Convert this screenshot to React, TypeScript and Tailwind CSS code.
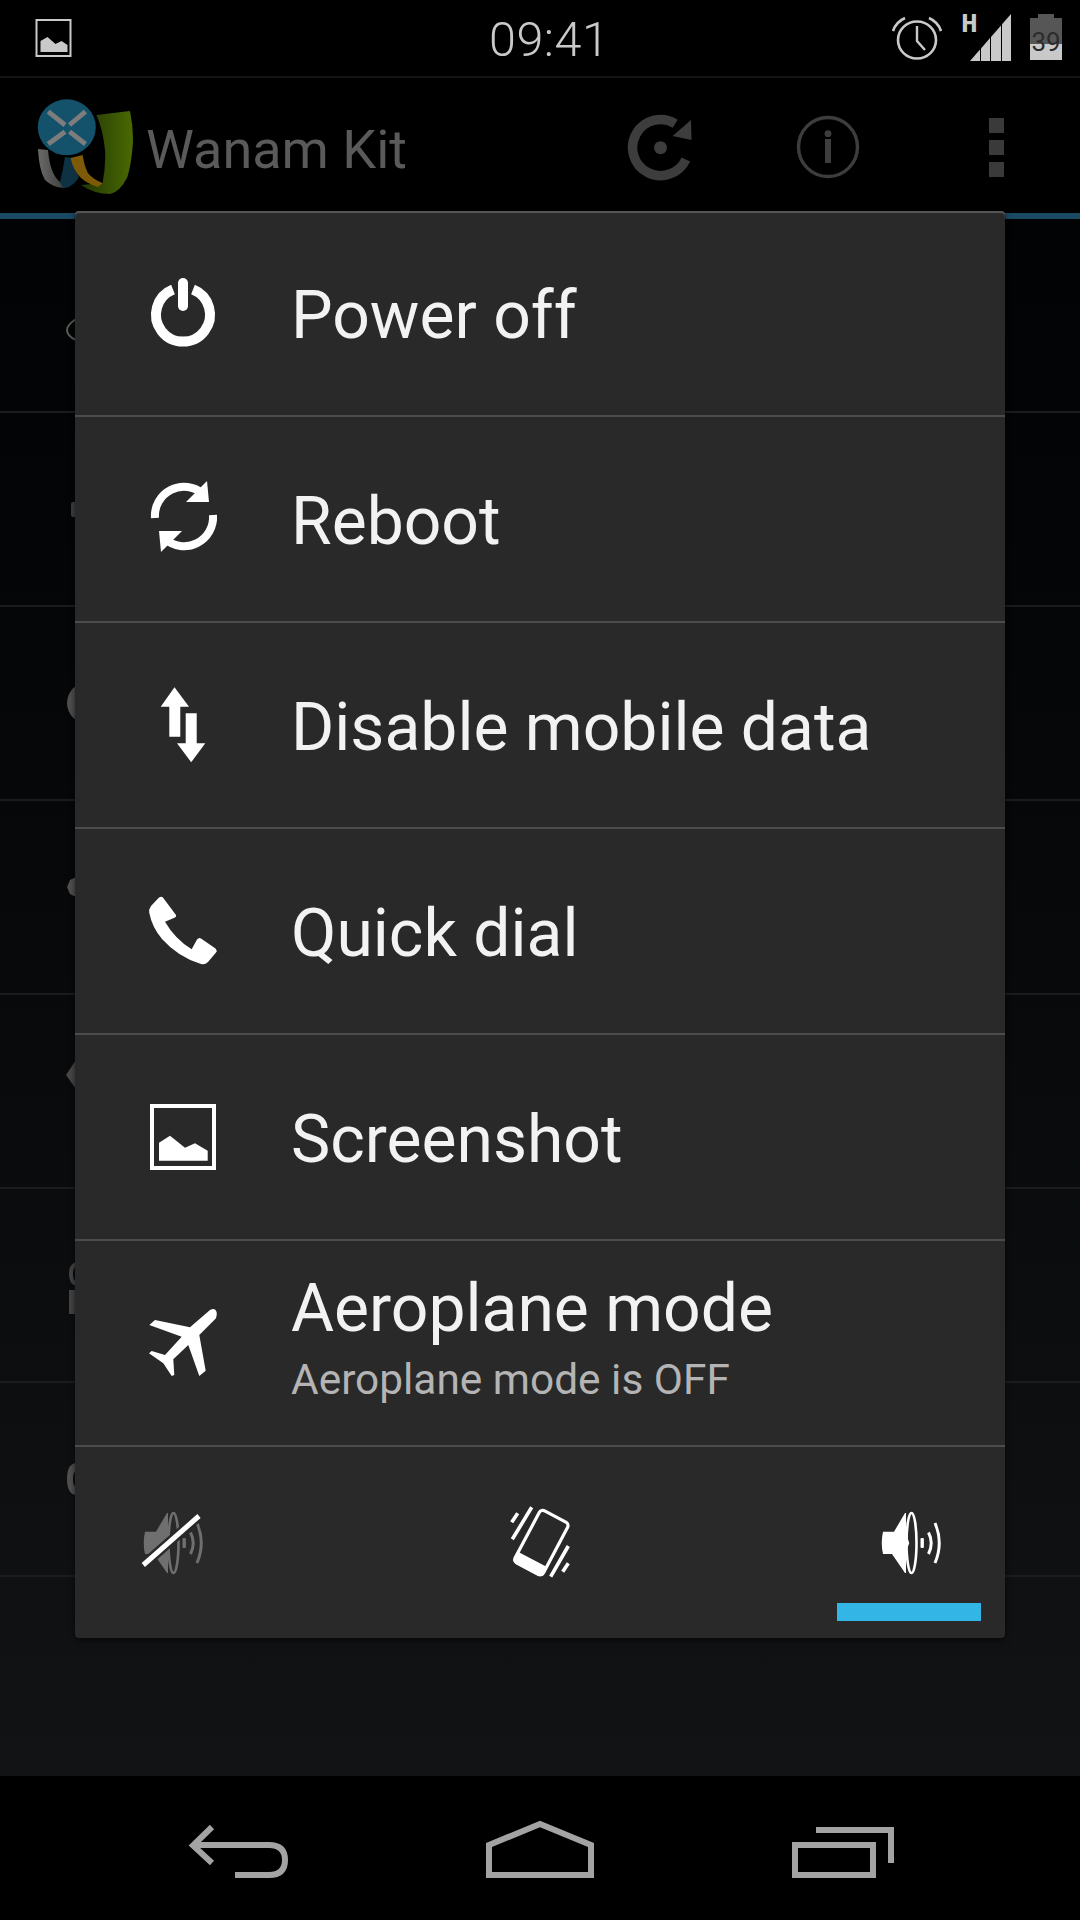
import type { ReactNode } from 'react'

function Icon({ children }: { children: ReactNode }) {
  return (
    <svg width="80" height="80" viewBox="0 0 80 80" className="shrink-0 overflow-visible">
      {children}
    </svg>
  )
}

const PowerIcon = () => (
  <Icon>
    <path d="M30 16 A27 27 0 1 0 50 16" fill="none" stroke="#fff" strokeWidth="10" transform="translate(0 0.5)" />
    <rect x="35" y="5" width="10" height="33" rx="5" fill="#fff" />
  </Icon>
)

const RebootIcon = () => (
  <Icon>
    <path d="M12 39 A29 29 0 0 1 60 15" fill="none" stroke="#fff" strokeWidth="8" />
    <path d="M64 2 L66 23 L43 23 Z" fill="#fff" />
    <path d="M70 36 A29 29 0 0 1 22 60" fill="none" stroke="#fff" strokeWidth="8" />
    <path d="M18 73 L16 52 L39 52 Z" fill="#fff" />
  </Icon>
)

const DataIcon = () => (
  <Icon>
    <path d="M31.5 2.3 L46 21.7 L37.3 21.7 L37.3 51.7 L26.3 51.7 L26.3 21.7 L17.7 21.7 Z" fill="#fff" />
    <path d="M48.2 77.3 L34 58.3 L42.7 58.3 L42.7 28.3 L53.7 28.3 L53.7 58.3 L62.3 58.3 Z" fill="#fff" />
  </Icon>
)

const PhoneIcon = () => (
  <Icon>
    <path
      d="M19.7 6.3 L33 24 Q33.5 25.5 32 26.5 L22 30.7 Q32 48 48.7 58.3 L54 48.5 Q56 46 58 47.5 L72.5 57.5 Q74.5 59.5 73 61.5 L65 71 Q62 74 58 73 Q35 66 19 48 Q9 36 6.3 22 Q5.5 18.5 8 15 L15.5 7 Q18 5 19.7 6.3 Z"
      fill="#fff"
    />
  </Icon>
)

const PictureIcon = () => (
  <Icon>
    <rect x="9" y="9" width="62" height="62" fill="none" stroke="#fff" strokeWidth="4" />
    <path d="M16 63.7 L16 45.7 L27 38.7 L42 50.7 L52 46.3 L64.7 53.7 L64.7 63.7 Z" fill="#fff" />
  </Icon>
)

const PlaneIcon = () => (
  <Icon>
    <path
      d="M67 7 L47 24.3 L12 17 L6.3 22 L38.7 33.7 L22 52 L8.7 48 L6 50.3 L20.3 60.3 L28.7 73 L31.3 72 L30.3 56.3 L45.3 42 L56.3 73 L62.7 67.7 L56.3 32 L73 15.3 Q75 9 72 6.5 Q70 5.5 67 7 Z"
      fill="#fff"
    />
  </Icon>
)

function Speaker({ color }: { color: string }) {
  return (
    <>
      <path
        d="M14 29.7 L25 29.7 L36 11 L37 11 L37 31 L40.3 41.3 L37 49 L37 71 L36 71 L23 52 L14 52 Q11.5 41 14 29.7 Z"
        fill={color}
      />
      <ellipse cx="42.5" cy="41" rx="5" ry="30" fill="none" stroke={color} strokeWidth="2.6" />
      <rect x="51.5" y="36" width="3.4" height="10" rx="1" fill={color} />
      <path d="M59.5 30.5 Q65 41 59.5 52" fill="none" stroke={color} strokeWidth="3" />
      <path d="M66 21 Q74.5 41 66 61" fill="none" stroke={color} strokeWidth="3" />
    </>
  )
}

const MuteIcon = () => (
  <Icon>
    <g transform="translate(-2 0)">
      <Speaker color="#6f6f6f" />
    </g>
    <path d="M10.3 63 L66 14" stroke="#292929" strokeWidth="10" />
    <path d="M10.3 63 L66 14" stroke="#fff" strokeWidth="5" />
  </Icon>
)

const VibrateIcon = () => (
  <Icon>
    <g transform="translate(40.4 40.6) rotate(28)">
      <rect x="-16" y="-29.5" width="32" height="59" rx="4" fill="none" stroke="#fff" strokeWidth="3.2" />
      <path d="M-17 19 L17 19 L17 27 Q17 30.5 13 30.5 L-13 30.5 Q-17 30.5 -17 27 Z" fill="#fff" />
    </g>
    <path d="M30.7 5.3 L11.3 37.3 M16.7 11.3 L10.7 20.3 M67.3 44 L49.7 74.7 M67.3 61.3 L61.7 69.7" stroke="#fff" strokeWidth="3.6" />
  </Icon>
)

const SoundIcon = () => (
  <Icon>
    <Speaker color="#fff" />
  </Icon>
)

function BackIcon() {
  return (
    <svg width="120" height="144" viewBox="0 0 120 144" fill="none" stroke="#a3a3a3" strokeWidth="6" className="shrink-0">
      <path d="M33 51 L14 69.5 L33 87" />
      <path d="M14 69 L90 69 Q106 69 106 84 Q106 99 90 99 L56 99" />
    </svg>
  )
}

function HomeIcon() {
  return (
    <svg width="120" height="144" viewBox="0 0 120 144" fill="none" stroke="#a3a3a3" strokeWidth="6" className="shrink-0">
      <path d="M9 69 L60 48 L111 69 L111 99 L9 99 Z" />
    </svg>
  )
}

function RecentsIcon() {
  return (
    <svg width="120" height="144" viewBox="0 0 120 144" fill="none" stroke="#a3a3a3" strokeWidth="6" className="shrink-0">
      <rect x="14" y="69" width="78" height="30" />
      <path d="M35 54 L110 54 L110 87" />
    </svg>
  )
}

function Logo() {
  return (
    <svg width="96" height="96" viewBox="37 99 96 96" className="ml-[37px] shrink-0">
      <defs>
        <linearGradient id="ribbon" x1="0" y1="0" x2="1" y2="0">
          <stop offset="0" stopColor="#223505" />
          <stop offset="1" stopColor="#4a6a02" />
        </linearGradient>
        <linearGradient id="tail" x1="0" y1="0" x2="1" y2="0">
          <stop offset="0" stopColor="#6a6a68" />
          <stop offset="1" stopColor="#3f3f3d" />
        </linearGradient>
      </defs>
      <path d="M38 149 L48 150 Q49 162 52 170 Q55 178 60 182 L64 188 Q52 187 45 180 Q39 170 38 149 Z" fill="url(#tail)" />
      <path d="M60 182 Q63 170 65 157 L72 158 Q74 170 79 177 Q74 186 65 188 L63 188 Z" fill="#0e3244" />
      <path d="M96.4 115 L130 111 Q134 130 132.6 147 Q131 165 127.4 177 Q120 192 110 194 Q94 194 81 185 L102.6 183 Q106 165 105 150 Q103 130 96.4 115 Z" fill="url(#ribbon)" />
      <path d="M70.6 158 L82.6 155 Q84 165 87.8 173 Q94 180 102.6 183 L98 187 Q88 184 81 178 Q73 170 70.6 158 Z" fill="#7c5a08" />
      <ellipse cx="66.8" cy="127.3" rx="29" ry="28" fill="#14526c" />
      <path d="M48.2 111.7 L65 125 M85.4 111.7 L69.5 125 M48.2 144 L65 131.7 M85.4 144 L69.5 131.7" stroke="#7d7d7d" strokeWidth="4.8" />
    </svg>
  )
}

const peeks: ReactNode[] = [
  <path key="cloud" d="M10 44 Q1 50 1 55 Q1 61 10 65" fill="none" stroke="#5a5a5a" strokeWidth="2" />,
  <rect key="toggle" x="5" y="33" width="6" height="15" rx="2" fill="#404040" />,
  <circle key="disc" cx="22" cy="40" r="21" fill="#4f4f4f" />,
  <path key="gear" d="M10 20 L4 23 L1 30 L4 37 L10 40 Z" fill="#505050" />,
  <path key="wedge" d="M10 9 L0 24 L10 38 Z" fill="#484848" />,
  <g key="lock" fill="none" stroke="#444">
    <path d="M10 19 Q5 21 5 29 Q5 37 10 39" strokeWidth="4" />
    <path d="M3 45 L3 69 L10 69 L10 45 Z" fill="#444" strokeWidth="0" />
  </g>,
  <path key="ring" d="M10 24 Q1 25 1 40 Q1 55 10 56 L10 48 Q7 47 7 40 Q7 33 10 32 Z" fill="#505050" />,
]

const items = [
  { label: 'Power off', icon: <PowerIcon /> },
  { label: 'Reboot', icon: <RebootIcon /> },
  { label: 'Disable mobile data', icon: <DataIcon /> },
  { label: 'Quick dial', icon: <PhoneIcon /> },
  { label: 'Screenshot', icon: <PictureIcon /> },
  { label: 'Aeroplane mode', sub: 'Aeroplane mode is OFF', icon: <PlaneIcon /> },
]

function StatusBar() {
  return (
    <div className="h-[76px] flex items-center bg-black text-[#c9c9c9]">
      <svg width="37" height="38" viewBox="0 0 36 38" className="ml-[35px] shrink-0">
        <rect x="1" y="1" width="34" height="36" fill="none" stroke="#c9c9c9" strokeWidth="2" />
        <path d="M5 33 L5 22 L12 18 L20 25 L26 22 L32 26 L32 33 Z" fill="#c9c9c9" />
      </svg>
      <span className="ml-[417px] w-[121px] pt-[4px] text-[48.5px] font-light leading-none tracking-[0.5px]">09:41</span>
      <svg width="50" height="46" viewBox="0 0 50 46" fill="none" stroke="#c9c9c9" className="ml-[282px] shrink-0">
        <ellipse cx="25" cy="25" rx="19" ry="18.5" strokeWidth="2.6" />
        <path d="M25 11 L25 26 L33 35" strokeWidth="2.4" />
        <path d="M1 16 Q4 7 13 3 M37 3 Q46 7 49 16" strokeWidth="2.6" />
      </svg>
      <div className="relative ml-[21px] w-[50px] h-[47px] shrink-0 -mt-[2px]">
        <span className="absolute -left-[2px] top-0 text-[28px] leading-[22px] font-bold font-['Liberation_Mono',monospace]">H</span>
        <svg width="43" height="47" viewBox="957 13 43 47" preserveAspectRatio="none" fill="#c9c9c9" className="absolute left-[7px] top-0">
          <path d="M957 60 L967 48.5 L967 60 Z" />
          <path d="M968 47.4 L977 37 L977 60 L968 60 Z" />
          <path d="M978 35.9 L988 24.5 L988 60 L978 60 Z" />
          <path d="M989 23.3 L998 13 L998 60 L989 60 Z" />
        </svg>
      </div>
      <div className="ml-[17px] w-[32px] h-[46px] flex flex-col items-center shrink-0 relative -mt-[2px]">
        <div className="w-[16px] h-[4px] bg-[#565656]" />
        <div className="w-full h-[26px] bg-[#565656]" />
        <div className="w-full h-[16px] bg-[#c9c9c9]" />
        <span className="absolute left-0 right-0 top-[15px] text-center text-[26px] leading-none text-[#2c2c2c]">39</span>
      </div>
    </div>
  )
}

function ActionBar() {
  return (
    <div className="h-[135px] flex items-center pt-[3px] bg-black">
      <Logo />
      <span className="ml-[13px] w-[260px] pt-[5px] text-[54px] leading-none text-[#5a5a5a] whitespace-nowrap">Wanam Kit</span>
      <svg width="76" height="70" viewBox="622 112 76 70" fill="none" className="ml-[216px] shrink-0">
        <path d="M685.9 159.5 A28 28 0 1 1 675.2 123.7" stroke="#3d3d3d" strokeWidth="9.5" />
        <path d="M691 120 L691.5 140 L672.6 136 Z" fill="#3d3d3d" />
        <circle cx="660.5" cy="147.7" r="6.5" fill="#3d3d3d" />
      </svg>
      <svg width="64" height="64" viewBox="796 115 64 64" className="ml-[98px] shrink-0">
        <circle cx="828" cy="147" r="29.5" fill="none" stroke="#3d3d3d" strokeWidth="3.4" />
        <circle cx="828" cy="133.7" r="3.4" fill="#3d3d3d" />
        <rect x="825" y="139" width="6" height="24" fill="#3d3d3d" />
      </svg>
      <div className="ml-[129px] flex flex-col gap-[7px] shrink-0">
        <div className="w-[15px] h-[15px] bg-[#3a3a3a]" />
        <div className="w-[15px] h-[15px] bg-[#3a3a3a]" />
        <div className="w-[15px] h-[15px] bg-[#3a3a3a]" />
      </div>
    </div>
  )
}

function PowerDialog() {
  return (
    <div className="absolute left-[75px] top-[211px] w-[930px] h-[1427px] flex flex-col rounded-[4px] bg-[#292929] shadow-[inset_0_2px_0_#555,0_2px_6px_rgba(0,0,0,0.6)]">
      {items.map((item) => (
        <div key={item.label} className="h-[206px] shrink-0 flex items-center pl-[68px] border-b-2 border-[#4c4c4c]">
          {item.icon}
          <div className={item.sub ? 'ml-[68px] flex flex-col' : 'ml-[68px] pt-[6px] flex flex-col'}>
            <span className="text-[66px] leading-[74px] text-[#f2f2f2]">{item.label}</span>
            {item.sub && <span className="text-[42.4px] leading-[68px] text-[#b4b4b4]">{item.sub}</span>}
          </div>
        </div>
      ))}
      <div className="flex-1 flex justify-between pl-[26px] pr-[24px] pt-[55px]">
        {[<MuteIcon key="mute" />, <VibrateIcon key="vibrate" />, <SoundIcon key="sound" />].map((icon, i) => (
          <div key={i} className="w-[144px] flex flex-col items-center">
            {icon}
            <div className={i === 2 ? 'mt-[21px] w-full h-[18px] bg-[#33b5e5]' : 'mt-[21px] w-full h-[18px]'} />
          </div>
        ))}
      </div>
    </div>
  )
}

export default function App() {
  return (
    <div className="relative w-[1080px] h-[1920px] overflow-hidden flex flex-col bg-black font-['Roboto',sans-serif]">
      <StatusBar />
      <div className="h-[2px] bg-[#141414]" />
      <ActionBar />
      <div className="h-[6px] bg-[#1a4a63]" />
      <div className="flex-1 flex flex-col bg-gradient-to-b from-[#020304] to-[#111315]">
        {peeks.map((peek, i) => (
          <div key={i} className="h-[194px] shrink-0 flex items-center pl-[66px] border-b-2 border-[#1b1c1e]">
            <svg width="80" height="80" viewBox="0 0 80 80" className="shrink-0 overflow-visible">
              {peek}
            </svg>
          </div>
        ))}
      </div>
      <div className="h-[144px] flex pl-[179px] gap-[181px] bg-black">
        <BackIcon />
        <HomeIcon />
        <RecentsIcon />
      </div>
      <PowerDialog />
    </div>
  )
}
